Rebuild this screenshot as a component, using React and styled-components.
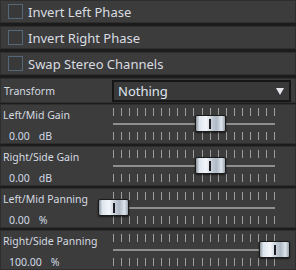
import React from 'react';
import styled, { createGlobalStyle } from 'styled-components';

const GlobalStyle = createGlobalStyle`
  html, body {
    margin: 0;
    padding: 0;
    background: #1c1c1c;
  }
  body {
    font-family: "Noto Sans", "DejaVu Sans", sans-serif;
  }
`;

const TICKS = Array.from({ length: 21 });

const sliders = [
  { label: 'Left/Mid Gain', value: '0.00', unit: 'dB', pos: 0.6 },
  { label: 'Right/Side Gain', value: '0.00', unit: 'dB', pos: 0.6 },
  { label: 'Left/Mid Panning', value: '0.00', unit: '%', pos: 0 },
  { label: 'Right/Side Panning', value: '100.00', unit: '%', pos: 1 },
];

const App = () => {
  return (
    <Panel>
      <GlobalStyle />
      <CheckGroup>
        {['Invert Left Phase', 'Invert Right Phase', 'Swap Stereo Channels'].map(text => (
          <CheckRow key={text}>
            <CheckBox />
            <CheckText>{text}</CheckText>
          </CheckRow>
        ))}
      </CheckGroup>
      <TransformRow>
        <SmallLabel>Transform</SmallLabel>
        <Select>
          <SelectText>Nothing</SelectText>
          <Arrow />
        </Select>
      </TransformRow>
      <SliderGroup>
        {sliders.map(s => (
          <SliderRow key={s.label}>
            <Info>
              <SmallLabel>{s.label}</SmallLabel>
              <Value>
                <span>{s.value}</span>
                <Unit>{s.unit}</Unit>
              </Value>
            </Info>
            <Fader>
              <Ticks>
                {TICKS.map((_, i) => <Tick key={i} />)}
              </Ticks>
              <Track />
              <Ticks>
                {TICKS.map((_, i) => <Tick key={i} />)}
              </Ticks>
              <Thumb style={{ left: `${s.pos * 161}px` }}>
                <Grip />
              </Thumb>
            </Fader>
          </SliderRow>
        ))}
      </SliderGroup>
    </Panel>
  );
};

const Panel = styled.div`
  width: 296px;
  height: 270px;
  overflow: hidden;
  display: flex;
  flex-direction: column;
  background: #1c1c1c;
`;

const CheckGroup = styled.div`
  display: flex;
  flex-direction: column;
  gap: 3px;
`;

const Box = styled.div`
  box-sizing: border-box;
  background: #3c3c3c;
  border: 1px solid #2e2e2e;
`;

const CheckRow = styled(Box)`
  height: 23px;
  display: flex;
  align-items: center;
  padding-left: 7px;
`;

const CheckBox = styled.div`
  box-sizing: border-box;
  width: 15px;
  height: 15px;
  border: 1px solid #55687a;
  background: #393939;
`;

const CheckText = styled.span`
  margin-left: 5px;
  font-size: 13px;
  color: #d9dde2;
  white-space: nowrap;
`;

const TransformRow = styled(Box)`
  margin-top: 3px;
  height: 28px;
  display: flex;
  align-items: center;
  padding: 1px 4px 0 3px;
  justify-content: space-between;
`;

const SmallLabel = styled.span`
  font-size: 10.5px;
  color: #d5dae0;
  white-space: nowrap;
`;

const Select = styled.div`
  box-sizing: border-box;
  width: 179px;
  height: 22px;
  border: 2px solid #161616;
  background: #393939;
  display: flex;
  align-items: center;
  justify-content: space-between;
  padding: 0 5px 0 4px;
`;

const SelectText = styled.span`
  font-size: 13px;
  color: #dfe6f0;
`;

const Arrow = styled.div`
  width: 0;
  height: 0;
  border-left: 4.5px solid transparent;
  border-right: 4.5px solid transparent;
  border-top: 7px solid #e4e6ea;
`;

const SliderGroup = styled.div`
  margin-top: 1px;
  display: flex;
  flex-direction: column;
  gap: 2px;
`;

const SliderRow = styled(Box)`
  height: 40px;
  display: flex;
  padding-left: 2px;
`;

const Info = styled.div`
  width: 110px;
  display: flex;
  flex-direction: column;
  padding-top: 3px;
  gap: 7px;
`;

const Value = styled.div`
  padding-left: 6px;
  font-size: 10.5px;
  color: #d0dae6;
  display: flex;
  gap: 9px;
`;

const Unit = styled.span``;

const Fader = styled.div`
  position: relative;
  width: 162px;
  padding-top: 3px;
  display: flex;
  flex-direction: column;
`;

const Ticks = styled.div`
  display: flex;
  justify-content: space-between;
  height: 8px;
`;

const Tick = styled.div`
  width: 1px;
  height: 8px;
  background: #9c9c9c;
`;

const Track = styled.div`
  margin: 7px 0 7px;
  height: 2px;
  background: #8e8e8e;
`;

const Thumb = styled.div`
  position: absolute;
  top: 10px;
  margin-left: -15px;
  box-sizing: border-box;
  width: 31px;
  height: 17px;
  border: 1px solid #1b1b1b;
  border-radius: 2px;
  background: linear-gradient(
    90deg,
    #8d96a0 0%,
    #dfe6ee 12%,
    #f3f6fa 35%,
    #c5cdd6 55%,
    #aeb9c5 70%,
    #dde3ea 88%,
    #9aa3ad 100%
  );
  box-shadow: 0 1px 2px rgba(0, 0, 0, 0.6);
  display: flex;
  align-items: center;
  justify-content: center;
`;

const Grip = styled.div`
  width: 2px;
  height: 10px;
  background: #1e1e22;
`;

export default App;
